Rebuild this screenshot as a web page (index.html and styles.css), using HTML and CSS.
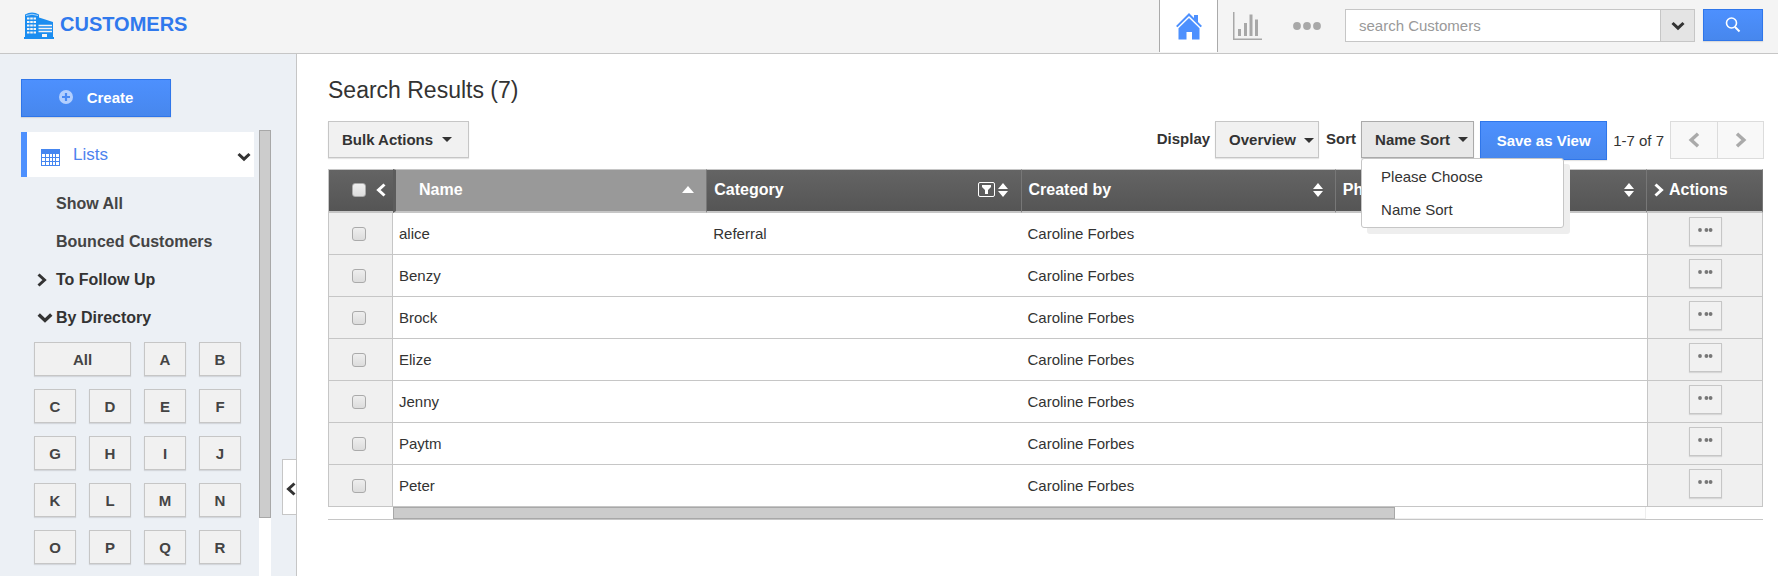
FILE: index.html
```html
<!DOCTYPE html>
<html lang="en">
<head>
    <meta charset="UTF-8">
    <meta name="viewport" content="width=device-width, initial-scale=1.0">
    <title>Customers</title>
    <link rel="stylesheet" href="styles.css">
</head>
<body>
    <!-- shared icons -->
    <svg class="icon-defs" aria-hidden="true">
        <symbol id="chevron-down" viewBox="0 0 14 10"><path d="M1.5 2L7 7.2L12.5 2" fill="none" stroke="currentColor" stroke-width="3"/></symbol>
        <symbol id="chevron-right" viewBox="0 0 10 14"><path d="M1.5 1.5L7.5 7L1.5 12.5" fill="none" stroke="currentColor" stroke-width="3"/></symbol>
        <symbol id="chevron-left" viewBox="0 0 10 14"><path d="M8.5 1.5L2.5 7L8.5 12.5" fill="none" stroke="currentColor" stroke-width="3"/></symbol>
        <symbol id="sort-icon" viewBox="0 0 10 14"><path d="M0 6L5 0L10 6ZM0 8H10L5 14Z" fill="currentColor"/></symbol>
        <symbol id="row-dots" viewBox="0 0 15 4"><circle cx="2" cy="2" r="1.9"/><circle cx="8.4" cy="2" r="1.9"/><circle cx="12.6" cy="2" r="1.9"/></symbol>
    </svg>

    <header class="topbar">
        <div class="brand">
            <svg class="brand-icon" viewBox="0 0 30 27" aria-hidden="true">
                <path d="M1 2.5Q8 -1.5 15 2.5V5.500L29 10V25H30V27H0V25H1Z" fill="#1b8df0"/>
                <path d="M2 3.500Q8 1 14 3.500" fill="none" stroke="#cfe6fb" stroke-width="0.800"/>
                <path d="M3 6.500H12M3 10H12M3 13.500H12M3 17H12M3 20.500H12" stroke="#f4f4f4" stroke-width="1.800" stroke-dasharray="2.500 0.700 2.600 0.700"/>
                <path d="M14.500 13.500H28M14.500 16.500H28M14.500 19.500H28" stroke="#f4f4f4" stroke-width="1.300"/>
                <rect x="18" y="22" width="5" height="3" fill="#f4f4f4"/>
            </svg>
            <span class="brand-name">CUSTOMERS</span>
        </div>
        <nav class="top-tabs">
            <a class="top-tab active" href="#" aria-label="Home">
                <svg width="26" height="27" viewBox="0 0 26 27" fill="#4d90fe" aria-hidden="true">
                    <path d="M13 0L0 13L1.500 14.200L13 3L24.500 14.200L26 13L22 9V2H18V5Z"/>
                    <path d="M13 5L2.500 15.200V26.500H10.500V19H16V26.500H23.500V15.200Z"/>
                </svg>
            </a>
            <a class="top-tab" href="#" aria-label="Reports">
                <svg width="29" height="28" viewBox="0 0 29 28" fill="#a8a8a8" aria-hidden="true">
                    <path d="M0 0H1.500V26.500H29V28H0Z"/>
                    <path d="M5 17H8V24H5ZM11 11H14V24H11ZM16.500 2.500H19.500V24H16.500ZM22 7.500H25V24H22Z"/>
                </svg>
            </a>
            <a class="top-tab" href="#" aria-label="More">
                <svg width="28" height="8" viewBox="0 0 28 8" fill="#a8a8a8" aria-hidden="true">
                    <circle cx="4" cy="4" r="3.900"/><circle cx="14" cy="4" r="3.900"/><circle cx="24" cy="4" r="3.900"/>
                </svg>
            </a>
        </nav>
        <form class="search">
            <input class="search-input" type="text" placeholder="search Customers" aria-label="search Customers">
            <button class="search-options" type="button" aria-label="Search options">
                <svg width="14" height="10"><use href="#chevron-down"/></svg>
            </button>
            <button class="search-btn" type="submit" aria-label="Search">
                <svg width="16" height="16" viewBox="0 0 16 16" fill="none" stroke="#fff" aria-hidden="true">
                    <circle cx="6.500" cy="6" r="5" stroke-width="1.600"/>
                    <path d="M10 10L14.500 14.500" stroke-width="2"/>
                </svg>
            </button>
        </form>
    </header>

    <div class="page">
        <aside class="sidebar">
            <button class="btn btn-primary create-btn" type="button">
                <svg width="14" height="14" viewBox="0 0 14 14" aria-hidden="true">
                    <circle cx="7" cy="7" r="7" fill="#b3cffe"/>
                    <path d="M7 3V11M3 7H11" stroke="#4a8af4" stroke-width="2.200"/>
                </svg>
                Create
            </button>
            <div class="side-scroll">
                <nav class="side-nav">
                    <button class="lists-head" type="button">
                        <svg width="19" height="17" viewBox="0 0 19 17" aria-hidden="true">
                            <rect width="19" height="17" fill="#4586f0"/>
                            <path d="M1 5h3v3H1zM5 5h3v3H5zM9 5h2v3H9zM12 5h2v3h-2zM15 5h3v3h-3zM1 9h3v3H1zM5 9h3v3H5zM9 9h2v3H9zM12 9h2v3h-2zM15 9h3v3h-3zM1 13h3v3H1zM5 13h3v3H5zM9 13h2v3H9zM12 13h2v3h-2zM15 13h3v3h-3z" fill="#fff"/>
                        </svg>
                        <span class="lists-label">Lists</span>
                        <svg class="lists-arrow" width="14" height="10"><use href="#chevron-down"/></svg>
                    </button>
                    <ul class="side-links">
                        <li><a href="#"><span class="link-icon"></span>Show All</a></li>
                        <li><a href="#"><span class="link-icon"></span>Bounced Customers</a></li>
                        <li><a class="dark" href="#"><span class="link-icon"><svg width="10" height="14"><use href="#chevron-right"/></svg></span>To Follow Up</a></li>
                        <li><a class="dark" href="#"><span class="link-icon"><svg width="16" height="12"><use href="#chevron-down"/></svg></span>By Directory</a></li>
                    </ul>
                    <div class="letters">
                        <button class="btn letter letter-all" type="button">All</button>
                        <button class="btn letter" type="button">A</button>
                        <button class="btn letter" type="button">B</button>
                        <button class="btn letter" type="button">C</button>
                        <button class="btn letter" type="button">D</button>
                        <button class="btn letter" type="button">E</button>
                        <button class="btn letter" type="button">F</button>
                        <button class="btn letter" type="button">G</button>
                        <button class="btn letter" type="button">H</button>
                        <button class="btn letter" type="button">I</button>
                        <button class="btn letter" type="button">J</button>
                        <button class="btn letter" type="button">K</button>
                        <button class="btn letter" type="button">L</button>
                        <button class="btn letter" type="button">M</button>
                        <button class="btn letter" type="button">N</button>
                        <button class="btn letter" type="button">O</button>
                        <button class="btn letter" type="button">P</button>
                        <button class="btn letter" type="button">Q</button>
                        <button class="btn letter" type="button">R</button>
                    </div>
                </nav>
                <div class="v-track"><div class="v-thumb"></div></div>
            </div>
            <button class="collapse-btn" type="button" aria-label="Collapse sidebar">
                <svg width="10" height="14"><use href="#chevron-left"/></svg>
            </button>
        </aside>

        <main class="content">
            <h1>Search Results (7)</h1>
            <div class="toolbar">
                <button class="btn bulk-btn" type="button">Bulk Actions <span class="caret"></span></button>
                <div class="toolbar-right">
                    <label class="tool-label" for="display">Display</label>
                    <div class="select-wrap">
                        <select class="btn display-select" id="display">
                            <option>Overview</option>
                        </select>
                        <span class="caret"></span>
                    </div>
                    <span class="tool-label" id="sort-label">Sort</span>
                    <div class="sort">
                        <button class="btn sort-btn" type="button" aria-haspopup="true" aria-expanded="true" aria-describedby="sort-label">Name Sort <span class="caret"></span></button>
                        <ul class="sort-menu">
                            <li><a href="#">Please Choose</a></li>
                            <li><a href="#">Name Sort</a></li>
                        </ul>
                    </div>
                    <button class="btn btn-primary save-btn" type="button">Save as View</button>
                    <span class="count">1-7 of 7</span>
                    <div class="pager">
                        <button type="button" aria-label="Previous page"><svg width="12" height="16"><use href="#chevron-left"/></svg></button>
                        <button type="button" aria-label="Next page"><svg width="12" height="16"><use href="#chevron-right"/></svg></button>
                    </div>
                </div>
            </div>

            <table class="results">
                <colgroup>
                    <col class="col-check">
                    <col class="col-data">
                    <col class="col-data">
                    <col class="col-data">
                    <col>
                    <col class="col-actions">
                </colgroup>
                <thead>
                    <tr>
                        <th class="check-head"><div class="check-box"><input type="checkbox" aria-label="Select all"><svg width="10" height="14"><use href="#chevron-left"/></svg></div></th>
                        <th class="sorted"><div class="head">Name<span class="sort-up"></span></div></th>
                        <th>
                            <div class="head">Category
                                <span class="head-icons">
                                    <svg width="17" height="15" viewBox="0 0 17 15" aria-hidden="true"><rect x="0.500" y="0.500" width="16" height="14" rx="1.500" fill="none" stroke="#fff"/><path d="M4 3H13V5L10 8V12H7V8L4 5Z" fill="#fff"/></svg>
                                    <svg width="10" height="14"><use href="#sort-icon"/></svg>
                                </span>
                            </div>
                        </th>
                        <th><div class="head">Created by<svg width="10" height="14"><use href="#sort-icon"/></svg></div></th>
                        <th><div class="head">Phone<svg width="10" height="14"><use href="#sort-icon"/></svg></div></th>
                        <th><div class="head actions-head"><svg width="10" height="14"><use href="#chevron-right"/></svg>Actions</div></th>
                    </tr>
                </thead>
                <tbody>
                    <tr>
                        <td class="check"><input type="checkbox" aria-label="Select alice"></td>
                        <td>alice</td><td>Referral</td><td>Caroline Forbes</td><td></td>
                        <td class="actions"><button class="btn row-btn" type="button" aria-label="Actions for alice"><svg width="15" height="4"><use href="#row-dots"/></svg></button></td>
                    </tr>
                    <tr>
                        <td class="check"><input type="checkbox" aria-label="Select Benzy"></td>
                        <td>Benzy</td><td></td><td>Caroline Forbes</td><td></td>
                        <td class="actions"><button class="btn row-btn" type="button" aria-label="Actions for Benzy"><svg width="15" height="4"><use href="#row-dots"/></svg></button></td>
                    </tr>
                    <tr>
                        <td class="check"><input type="checkbox" aria-label="Select Brock"></td>
                        <td>Brock</td><td></td><td>Caroline Forbes</td><td></td>
                        <td class="actions"><button class="btn row-btn" type="button" aria-label="Actions for Brock"><svg width="15" height="4"><use href="#row-dots"/></svg></button></td>
                    </tr>
                    <tr>
                        <td class="check"><input type="checkbox" aria-label="Select Elize"></td>
                        <td>Elize</td><td></td><td>Caroline Forbes</td><td></td>
                        <td class="actions"><button class="btn row-btn" type="button" aria-label="Actions for Elize"><svg width="15" height="4"><use href="#row-dots"/></svg></button></td>
                    </tr>
                    <tr>
                        <td class="check"><input type="checkbox" aria-label="Select Jenny"></td>
                        <td>Jenny</td><td></td><td>Caroline Forbes</td><td></td>
                        <td class="actions"><button class="btn row-btn" type="button" aria-label="Actions for Jenny"><svg width="15" height="4"><use href="#row-dots"/></svg></button></td>
                    </tr>
                    <tr>
                        <td class="check"><input type="checkbox" aria-label="Select Paytm"></td>
                        <td>Paytm</td><td></td><td>Caroline Forbes</td><td></td>
                        <td class="actions"><button class="btn row-btn" type="button" aria-label="Actions for Paytm"><svg width="15" height="4"><use href="#row-dots"/></svg></button></td>
                    </tr>
                    <tr>
                        <td class="check"><input type="checkbox" aria-label="Select Peter"></td>
                        <td>Peter</td><td></td><td>Caroline Forbes</td><td></td>
                        <td class="actions"><button class="btn row-btn" type="button" aria-label="Actions for Peter"><svg width="15" height="4"><use href="#row-dots"/></svg></button></td>
                    </tr>
                </tbody>
            </table>
            <div class="h-scroll"><div class="h-track"><div class="h-thumb"></div></div></div>
        </main>
    </div>
</body>
</html>
```

FILE: styles.css
```css
* {
    box-sizing: border-box;
}

body {
    margin: 0;
    min-height: 100vh;
    display: flex;
    flex-direction: column;
    font-family: "Liberation Sans", Arial, sans-serif;
    font-size: 15px;
    color: #333;
    background-color: #fff;
}

button,
input,
select {
    font-family: inherit;
    font-size: 15px;
    margin: 0;
}

button {
    cursor: pointer;
}

a {
    color: inherit;
    text-decoration: none;
}

ul {
    list-style: none;
    margin: 0;
    padding: 0;
}

svg {
    display: block;
    flex: none;
}

.icon-defs {
    position: absolute;
    width: 0;
    height: 0;
}

/* Buttons */
.btn {
    display: flex;
    align-items: center;
    border: 1px solid #c6c6c6;
    border-radius: 0;
    background-color: #f1f1f1;
    box-shadow: 0 1px 1px rgba(0, 0, 0, 0.1);
    color: #333;
    font-weight: bold;
    padding: 0;
}

.btn-primary {
    justify-content: center;
    border-color: #2f76ea;
    background: linear-gradient(#4d90fe, #4787ed);
    color: #fff;
}

.caret {
    border: 5px solid transparent;
    border-top-color: #333;
    border-bottom: 0;
}

/* Top bar */
.topbar {
    display: flex;
    height: 54px;
    padding-right: 15px;
    background-color: #f4f4f4;
    border-bottom: 1px solid #c6c6c6;
}

.brand {
    display: flex;
    align-items: flex-start;
    gap: 6px;
    padding: 12px 0 0 24px;
    margin-right: auto;
}

.brand-icon {
    width: 30px;
    height: 27px;
}

.brand-name {
    font-size: 20px;
    line-height: 24px;
    font-weight: bold;
    color: #3079ed;
}

.top-tabs {
    display: flex;
    margin-right: 9px;
}

.top-tab {
    display: flex;
    align-items: center;
    justify-content: center;
    width: 59px;
    height: 52px;
}

.top-tab.active {
    background-color: #fff;
    border: solid #aaa;
    border-width: 0 1px;
}

.search {
    display: flex;
    align-items: flex-start;
    padding-top: 9px;
}

.search-input {
    width: 315px;
    height: 33px;
    padding: 0 13px;
    border: 1px solid #c6c6c6;
    border-right: 0;
    background-color: #fff;
}

.search-input::placeholder {
    color: #999;
}

.search-options {
    display: flex;
    align-items: center;
    justify-content: center;
    width: 35px;
    height: 33px;
    padding: 0;
    border: 1px solid #c6c6c6;
    background-color: #e4e4e4;
    color: #333;
}

.search-btn {
    display: flex;
    justify-content: center;
    width: 60px;
    height: 32px;
    margin-left: 8px;
    padding: 7px 0 0;
    border: 1px solid #2f76ea;
    background: linear-gradient(#4d90fe, #4787ed);
    box-shadow: 0 1px 1px rgba(0, 0, 0, 0.1);
}

/* Sidebar */
.page {
    display: flex;
    flex: 1;
}

.sidebar {
    position: relative;
    display: flex;
    flex-direction: column;
    flex: none;
    width: 297px;
    padding: 25px 25px 0 21px;
    background-color: #ecf0f5;
    border-right: 1px solid #c6c6c6;
}

.create-btn {
    gap: 14px;
    width: 150px;
    height: 38px;
    margin-bottom: 13px;
    padding-bottom: 2px;
}

.side-scroll {
    display: flex;
    flex: 1;
    gap: 5px;
}

.side-nav {
    flex: 1;
    padding: 2px 0 12px;
}

.lists-head {
    display: flex;
    align-items: center;
    gap: 13px;
    width: 100%;
    height: 45px;
    padding: 0 3px 0 14px;
    border: 0;
    border-left: 6px solid #4d90fe;
    background-color: #fff;
    color: #333;
}

.lists-head svg {
    margin-top: 5px;
}

.lists-label {
    font-size: 17px;
    color: #4d83ee;
}

.lists-arrow {
    margin-left: auto;
}

.side-links {
    padding: 8px 0 5px;
}

.side-links a {
    display: flex;
    align-items: center;
    height: 38px;
    font-size: 16px;
    font-weight: bold;
    color: #444;
}

.side-links a.dark {
    color: #333;
}

.link-icon {
    width: 35px;
    padding-left: 16px;
}

.letters {
    display: grid;
    grid-template-columns: repeat(4, 42px);
    gap: 13px;
    padding-left: 13px;
}

.letter {
    justify-content: center;
    height: 34px;
    color: #444;
}

.letter-all {
    grid-column: span 2;
}

.v-track {
    width: 12px;
    background-color: #fff;
}

.v-thumb {
    height: 87%;
    border: 1px solid #a8a8a8;
    background-color: #ccc;
}

.collapse-btn {
    position: absolute;
    right: 0;
    top: 405px;
    display: flex;
    align-items: center;
    width: 14px;
    height: 56px;
    padding: 4px 0 0 3px;
    border: 1px solid #c6c6c6;
    border-right: 0;
    background-color: #fff;
    color: #333;
}

/* Results */
.content {
    flex: 1;
    min-width: 0;
    padding: 22px 15px 0 31px;
}

h1 {
    margin: 0 0 17px;
    font-size: 23px;
    line-height: 28px;
    font-weight: normal;
}

.toolbar {
    display: flex;
    align-items: flex-start;
    justify-content: space-between;
    margin: 0 -1px 9px 0;
}

.toolbar-right {
    display: flex;
    align-items: flex-start;
}

.bulk-btn {
    gap: 9px;
    height: 37px;
    padding: 0 16px 0 13px;
}

.tool-label {
    line-height: 36px;
    font-weight: bold;
    margin-right: 5px;
}

.select-wrap {
    position: relative;
    margin-right: 7px;
}

.display-select {
    appearance: none;
    width: 104px;
    height: 37px;
    padding-left: 13px;
}

.select-wrap .caret {
    position: absolute;
    right: 5px;
    top: 17px;
    pointer-events: none;
}

.sort {
    position: relative;
    margin-right: 6px;
}

.sort-btn {
    gap: 8px;
    height: 37px;
    padding: 0 5px 0 13px;
    border-color: #aaa;
    background-color: #e8e8e8;
}

.sort-menu {
    position: absolute;
    top: 37px;
    left: 0;
    z-index: 1;
    width: 203px;
    height: 70px;
    padding: 1px 0;
    background-color: #fff;
    border: 1px solid #c6c6c6;
    border-radius: 3px;
    box-shadow: 6px 6px 0 #eee;
}

.sort-menu a {
    display: block;
    padding-left: 19px;
    line-height: 33px;
}

.save-btn {
    width: 127px;
    height: 39px;
    margin-right: 6px;
}

.count {
    line-height: 39px;
    margin-right: 6px;
}

.pager {
    display: flex;
    border: 1px solid #dcdcdc;
    background-color: #f8f8f8;
}

.pager button {
    display: flex;
    align-items: center;
    justify-content: center;
    width: 46px;
    height: 36px;
    padding: 0;
    border: 0;
    background: none;
    color: #aaa;
}

.pager button + button {
    border-left: 1px solid #dcdcdc;
}

.results {
    width: 100%;
    table-layout: fixed;
    border-collapse: separate;
    border-spacing: 0;
}

.col-check {
    width: 65px;
}

.col-data {
    width: 21.9%;
}

.col-actions {
    width: 116px;
}

.results th {
    height: 44px;
    padding: 0 7px 2px;
    background: linear-gradient(#646464, #555);
    border-top: 1px solid #c6c6c6;
    border-bottom: 2px solid #c6c6c6;
    border-right: 1px solid #777;
    color: #fff;
    font-size: 16px;
    text-align: left;
}

.results .check-head {
    padding: 0 0 2px 23px;
    border-left: 1px solid #c6c6c6;
    border-right: 0;
}

.check-box {
    display: flex;
    align-items: center;
    gap: 10px;
}

.results .sorted {
    padding: 0 12px 2px 23px;
    background: #999;
    border-left: 3px solid #5c5c5c;
}

.head {
    display: flex;
    align-items: center;
    justify-content: space-between;
}

.head-icons {
    display: flex;
    align-items: center;
    gap: 3px;
    margin-right: 6px;
}

.head > svg {
    margin-right: 5px;
}

.actions-head {
    justify-content: flex-start;
}

.sort-up {
    border: 6px solid transparent;
    border-bottom: 7px solid #fff;
    border-top: 0;
}

.results td {
    height: 42px;
    padding: 0 6px;
    border-bottom: 1px solid #c6c6c6;
}

.results .check {
    padding: 0 0 0 23px;
    background-color: #f0f0f0;
    border-left: 1px solid #c6c6c6;
    border-right: 1px solid #c6c6c6;
}

.results .actions {
    padding-bottom: 4px;
    background-color: #f0f0f0;
    border-left: 1px solid #c6c6c6;
    border-right: 1px solid #c6c6c6;
}

input[type="checkbox"] {
    appearance: none;
    display: block;
    width: 14px;
    height: 14px;
    border: 1px solid #aaa;
    border-radius: 3px;
    background: linear-gradient(#eee, #dcdcdc);
}

.row-btn {
    justify-content: center;
    width: 33px;
    height: 29px;
    margin: 0 auto;
    padding-bottom: 3px;
    fill: #777;
}

.h-scroll {
    padding: 0 117px 0 65px;
    border-bottom: 1px solid #c6c6c6;
}

.h-track {
    height: 12px;
    border: 1px solid #eee;
    border-width: 0 1px 1px 0;
}

.h-thumb {
    width: 80%;
    height: 12px;
    border: 1px solid #a8a8a8;
    background-color: #ccc;
}
```
